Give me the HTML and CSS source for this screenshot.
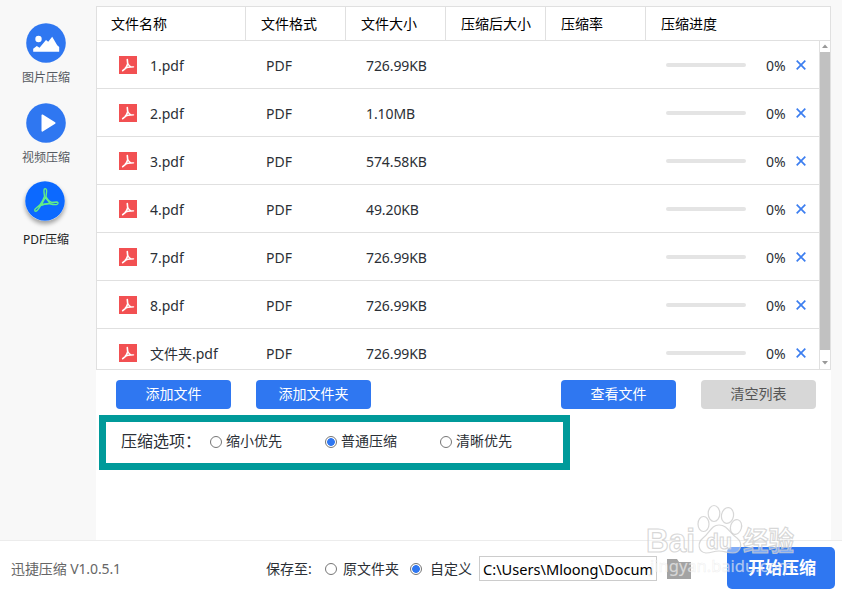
FILE: index.html
```html
<!DOCTYPE html>
<html lang="zh-CN">
<head>
    <meta charset="UTF-8">
    <meta name="viewport" content="width=device-width, initial-scale=1.0">
    <title>迅捷压缩</title>
    <link rel="stylesheet" href="styles.css">
</head>
<body>

<!-- Shared icons -->
<svg class="sprite">
    <symbol id="icon-pdf" viewBox="0 0 18 18">
        <rect width="18" height="18" fill="#f25052"/>
        <path d="M8.3 3.6L8.7 7.8C8.2 9.7 7.3 11.3 6.2 12.6L3.7 14.7" fill="none" stroke="#fff" stroke-width="1.6" stroke-linecap="round" stroke-linejoin="round"/>
        <path d="M8.8 7.8C9.8 9.3 11 10.4 12.3 11L14.6 10.9M6.4 12.2C8.3 11.3 10.2 10.9 12.3 11" fill="none" stroke="#fff" stroke-width="1.3" stroke-linecap="round"/>
    </symbol>
    <symbol id="icon-close" viewBox="0 0 10 10">
        <path d="M.7 .7L9.3 9.3M9.3 .7L.7 9.3" stroke="#3c7ef0" stroke-width="1.7"/>
    </symbol>
</svg>

<div class="content">
    <nav class="sidebar">
        <a class="nav-item nav-image">
            <svg width="40" height="40" viewBox="0 0 40 40">
                <circle cx="20" cy="20" r="19.8" fill="#2f77f1"/>
                <circle cx="12.5" cy="16" r="3.2" fill="#fff"/>
                <path d="M7.2 28.7V25.7L10.8 23L13.5 24.8L20 17L22.2 18.7L26.2 13.7L31.2 22.3L33.2 24V28.7Z" fill="#fff"/>
            </svg>
            <span>图片压缩</span>
        </a>
        <a class="nav-item nav-video">
            <svg width="40" height="40" viewBox="0 0 40 40">
                <circle cx="20" cy="20" r="19.8" fill="#2f77f1"/>
                <path d="M16.3 12.2L28.7 20L16.3 27.8Z" fill="#fff" stroke="#fff" stroke-width="1.6" stroke-linejoin="round"/>
            </svg>
            <span>视频压缩</span>
        </a>
        <a class="nav-item nav-pdf active">
            <svg width="40" height="40" viewBox="0 0 40 40">
                <circle cx="20" cy="20" r="19.8" fill="#0c69ff"/>
                <g fill="none" stroke="#63ee86" stroke-width="1.4" stroke-linejoin="round">
                    <path d="M19.2 8.2C20.4 6.8 22 8 21.6 10.7L21 15.6C22.4 18.6 24.2 20.8 26.8 21.4L31.8 21C33.6 21.2 33.4 23.3 31.4 23.6C29.1 23.8 27 23.4 24.8 22.8C21.7 22.6 18.4 23.2 15.6 24.6C14.3 26.8 12.6 29.4 11.3 30.2C9.7 30.8 9.2 28.9 10.4 27.7L15 23.9C16.9 21.1 18.6 18.5 19.5 15.5C19.4 12.7 18.4 10.2 19.2 8.2Z"/>
                    <path d="M20.3 16.5L16.4 23.7L25 22.1Z"/>
                </g>
            </svg>
            <span>PDF压缩</span>
        </a>
    </nav>

    <main class="main">
        <section class="file-table">
            <div class="table-head">
                <span>文件名称</span>
                <span>文件格式</span>
                <span>文件大小</span>
                <span>压缩后大小</span>
                <span>压缩率</span>
                <span>压缩进度</span>
            </div>
            <div class="table-body">
                <div class="rows">
                    <div class="row">
                        <svg class="pdf"><use href="#icon-pdf"/></svg><span class="name">1.pdf</span>
                        <span class="format">PDF</span><span class="size">726.99KB</span>
                        <i class="bar"></i><span class="percent">0%</span><svg class="close"><use href="#icon-close"/></svg>
                    </div>
                    <div class="row">
                        <svg class="pdf"><use href="#icon-pdf"/></svg><span class="name">2.pdf</span>
                        <span class="format">PDF</span><span class="size">1.10MB</span>
                        <i class="bar"></i><span class="percent">0%</span><svg class="close"><use href="#icon-close"/></svg>
                    </div>
                    <div class="row">
                        <svg class="pdf"><use href="#icon-pdf"/></svg><span class="name">3.pdf</span>
                        <span class="format">PDF</span><span class="size">574.58KB</span>
                        <i class="bar"></i><span class="percent">0%</span><svg class="close"><use href="#icon-close"/></svg>
                    </div>
                    <div class="row">
                        <svg class="pdf"><use href="#icon-pdf"/></svg><span class="name">4.pdf</span>
                        <span class="format">PDF</span><span class="size">49.20KB</span>
                        <i class="bar"></i><span class="percent">0%</span><svg class="close"><use href="#icon-close"/></svg>
                    </div>
                    <div class="row">
                        <svg class="pdf"><use href="#icon-pdf"/></svg><span class="name">7.pdf</span>
                        <span class="format">PDF</span><span class="size">726.99KB</span>
                        <i class="bar"></i><span class="percent">0%</span><svg class="close"><use href="#icon-close"/></svg>
                    </div>
                    <div class="row">
                        <svg class="pdf"><use href="#icon-pdf"/></svg><span class="name">8.pdf</span>
                        <span class="format">PDF</span><span class="size">726.99KB</span>
                        <i class="bar"></i><span class="percent">0%</span><svg class="close"><use href="#icon-close"/></svg>
                    </div>
                    <div class="row">
                        <svg class="pdf"><use href="#icon-pdf"/></svg><span class="name">文件夹.pdf</span>
                        <span class="format">PDF</span><span class="size">726.99KB</span>
                        <i class="bar"></i><span class="percent">0%</span><svg class="close"><use href="#icon-close"/></svg>
                    </div>
                </div>
                <div class="scrollbar">
                    <svg width="11" height="11" viewBox="0 0 11 11"><path d="M2 7L5 3.5L8 7Z" fill="#999"/></svg>
                    <div class="thumb"></div>
                    <svg width="11" height="19" viewBox="0 0 11 19"><path d="M2 11L5 14.5L8 11Z" fill="#999"/></svg>
                </div>
            </div>
        </section>

        <div class="buttons">
            <button>添加文件</button>
            <button>添加文件夹</button>
            <button class="view">查看文件</button>
            <button class="clear">清空列表</button>
        </div>

        <div class="options">
            <span class="options-title">压缩选项：</span>
            <label><input type="radio" name="mode">缩小优先</label>
            <label><input type="radio" name="mode" checked>普通压缩</label>
            <label><input type="radio" name="mode">清晰优先</label>
        </div>
    </main>
</div>

<footer class="footer">
    <span class="version">迅捷压缩 V1.0.5.1</span>
    <span class="save-to">保存至:</span>
    <label class="save-source"><input type="radio" name="target">原文件夹</label>
    <label class="save-custom"><input type="radio" name="target" checked>自定义</label>
    <div class="path"><div>C:\Users\Mloong\Documents</div></div>
    <svg class="folder" width="24" height="20" viewBox="0 0 24 20"><path d="M0 0H10L12 3H24V20H0Z" fill="#a3a3a3"/></svg>
    <button class="start">开始压缩</button>
</footer>

<!-- Watermark over the bottom right corner -->
<svg class="watermark" width="160" height="80" viewBox="0 0 160 80">
    <g class="outline">
        <text class="bai" x="3" y="52" font-size="34" textLength="49" lengthAdjust="spacingAndGlyphs">Bai</text>
        <ellipse cx="60.5" cy="24" rx="5.5" ry="7.5"/>
        <ellipse cx="71" cy="13.5" rx="5.8" ry="8"/>
        <ellipse cx="84.5" cy="15.5" rx="6" ry="8" transform="rotate(10 84.5 15.5)"/>
        <ellipse cx="93" cy="27" rx="5.5" ry="7.5" transform="rotate(15 93 27)"/>
        <path d="M76 25C85 25 86 33 94 38C101 44 97 53 90 53C83 53 82 51 76 51C70 51 69 53 63 53C55 52 54 43 60 38C67 33 68 25 76 25Z"/>
        <text x="63" y="49" font-size="22" textLength="26" lengthAdjust="spacingAndGlyphs">du</text>
        <text x="100" y="51" font-size="27" textLength="51" lengthAdjust="spacingAndGlyphs">经验</text>
    </g>
    <text class="site" x="7" y="72" font-size="16" textLength="143" lengthAdjust="spacingAndGlyphs">jingyan.baidu.com</text>
</svg>

</body>
</html>
```
FILE: styles.css
```css
* {
    box-sizing: border-box;
}

body {
    margin: 0;
    width: 842px;
    height: 596px;
    overflow: hidden;
    background-color: #fff;
    color: #2b2f36;
    font-family: "Noto Sans", "Noto Sans CJK SC", sans-serif;
    font-size: 14px;
    line-height: 20px;
}

.sprite {
    display: none;
}

.content {
    display: flex;
    height: 540px;
    padding-right: 11px;
    background-color: #f8f8f8;
}

/* Sidebar */
.sidebar {
    width: 96px;
    padding: 23px 4px 0 0;
}

.nav-item {
    display: flex;
    flex-direction: column;
    align-items: center;
    height: 80px;
    color: #555a61;
    font-size: 12px;
}

.nav-item span {
    margin-top: 5px;
}

.nav-item.active {
    height: 90px;
    margin-top: -2px;
    color: #222;
}

.active svg {
    margin-right: 2px;
    overflow: visible;
    border-radius: 50%;
    box-shadow: 0 3px 4px rgba(0, 0, 0, 0.35);
}

.active span {
    margin-top: 9px;
}

/* File table */
.main {
    width: 735px;
    padding-top: 6px;
    background: linear-gradient(#f8f8f8 6px, #fff 6px);
}

.file-table {
    height: 364px;
    border: 1px solid #e0e0e0;
    background-color: #fff;
}

.table-head {
    display: grid;
    grid-template-columns: 149px 100px 100px 100px 100px 1fr;
    height: 34px;
    border-bottom: 1px solid #e0e0e0;
    color: #000;
    line-height: 33px;
}

.table-head span {
    padding-left: 15px;
    border-right: 1px solid #e0e0e0;
}

.table-head span:first-child {
    padding-left: 14px;
}

.table-head span:last-child {
    border-right: none;
}

.table-body {
    display: flex;
    height: 328px;
    overflow: hidden;
}

.rows {
    width: 723px;
    border-right: 1px solid #e0e0e0;
}

.row {
    display: grid;
    grid-template-columns: 31px 116px 100px 300px 100px 25px 10px;
    align-items: center;
    height: 48px;
    padding: 1px 0 0 22px;
    border-bottom: 1px solid #e0e0e0;
}

.row span {
    padding-top: 2px;
}

.size {
    letter-spacing: -0.1px;
}

.pdf {
    width: 18px;
    height: 18px;
}

.bar {
    width: 80px;
    height: 4px;
    border-radius: 2px;
    background-color: #e4e4e4;
}

.close {
    width: 10px;
    height: 10px;
    margin-left: 5px;
}

.scrollbar {
    display: flex;
    flex-direction: column;
    width: 11px;
    margin-right: -1px;
}

.thumb {
    height: 298px;
    background-color: #c1c1c1;
}

/* Buttons */
button {
    width: 115px;
    height: 29px;
    padding: 0 0 2px;
    border: none;
    border-radius: 4px;
    background-color: #2f77f1;
    color: #fff;
    font-family: inherit;
    font-size: 14px;
    line-height: 20px;
}

.buttons {
    display: flex;
    gap: 25px;
    padding: 10px 15px 0 20px;
}

.buttons .view {
    margin-left: auto;
}

.buttons .clear {
    background-color: #d7d7d7;
    color: #555;
}

/* Compression options */
.options {
    display: flex;
    align-items: center;
    width: 471px;
    height: 55px;
    margin: 6px 0 0 3px;
    padding: 0 0 3px 15px;
    border: 7px solid #009a9a;
}

.options-title {
    width: 89px;
    font-size: 16px;
    white-space: nowrap;
}

label {
    display: flex;
    align-items: center;
    white-space: nowrap;
}

.options label {
    width: 115px;
}

input[type="radio"] {
    appearance: none;
    flex: none;
    width: 12px;
    height: 12px;
    margin: 1px 4px 0 0;
    border: 1px solid #767676;
    border-radius: 50%;
    background-color: #fff;
}

input[type="radio"]:checked {
    background: radial-gradient(circle, #2f77f1 3.5px, #fff 4.2px);
}

/* Footer */
.footer {
    display: flex;
    align-items: center;
    height: 56px;
    padding: 0 7px 0 11px;
    border-top: 1px solid #ececec;
}

.version {
    width: 255px;
    color: #666;
    letter-spacing: -0.1px;
}

.save-to {
    width: 59px;
    white-space: nowrap;
}

.save-source {
    width: 85px;
}

.save-custom {
    width: 69px;
}

.footer input[type="radio"] {
    margin-right: 6px;
}

.save-custom input[type="radio"] {
    margin-right: 8px;
}

.path {
    width: 178px;
    height: 25px;
    padding: 0 3px;
    border: 1px solid #ccc;
    color: #000;
    font-size: 14.6px;
    line-height: 25px;
}

.path div {
    height: 23px;
    overflow: hidden;
}

.folder {
    margin-left: 10px;
}

.start {
    width: 108px;
    height: 42px;
    margin: 0 0 2px auto;
    padding: 0 0 0 2px;
    border-radius: 5px;
    font-size: 17px;
    font-weight: bold;
}

/* Watermark */
.watermark {
    position: absolute;
    top: 500px;
    left: 643px;
    font-weight: bold;
}

.outline {
    fill: rgba(255, 255, 255, 0.4);
    stroke: rgba(205, 205, 205, 0.8);
    stroke-width: 1.2;
}

.bai {
    font-family: "Liberation Sans", sans-serif;
}

.site {
    fill: rgba(255, 255, 255, 0.6);
    stroke: rgba(205, 205, 205, 0.3);
    stroke-width: 0.6;
    font-weight: normal;
}
```
